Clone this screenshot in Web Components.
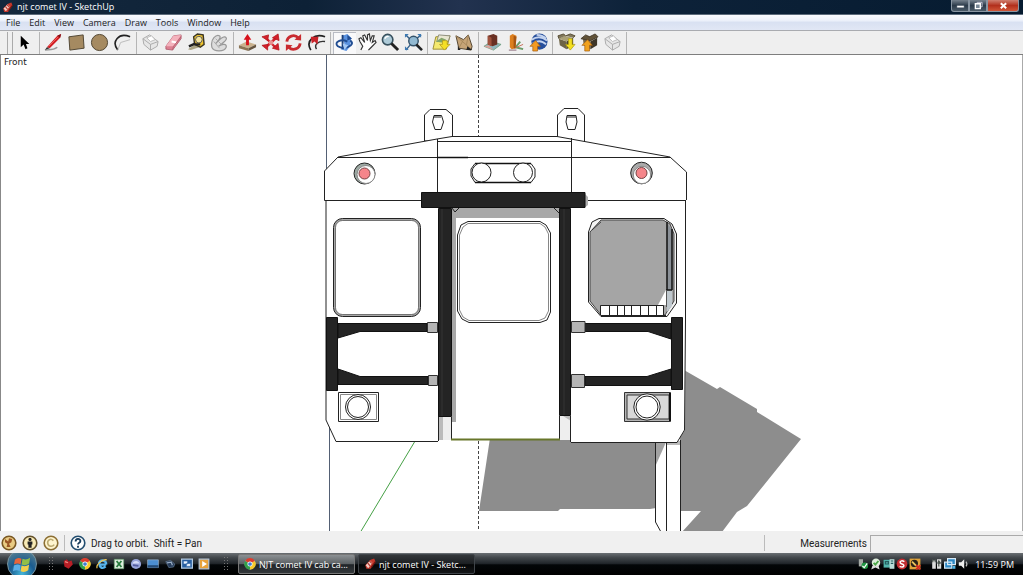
<!DOCTYPE html>
<html lang="en">
<head>
<meta charset="utf-8">
<title>njt comet IV - SketchUp</title>
<style>
html,body{margin:0;height:100%}
body{font-family:"Open Sans","Noto Sans",sans-serif;font-size:9px;color:#222;background:#000}
</style>
</head>
<body>
<sketch-desktop></sketch-desktop>
<script>
const define = (name, html, setup) => {
  const t = document.createElement('template');
  t.innerHTML = html;
  customElements.define(name, class extends HTMLElement {
    constructor() {
      super();
      this.attachShadow({ mode: 'open' }).append(t.content.cloneNode(true));
    }
    connectedCallback() { if (setup) setup(this, this.shadowRoot); }
  });
};

const chrome = `<circle cx="10" cy="10" r="9" fill="#ddd"/><path d="M10 10L2 5A9 9 0 0 1 18 5Z" fill="#dd3c2c"/><path d="M10 10L18 5A9 9 0 0 1 10 19Z" fill="#f6c92b"/><path d="M10 10V19A9 9 0 0 1 2 5Z" fill="#33a04a"/><circle cx="10" cy="10" r="4.2" fill="#fff"/><circle cx="10" cy="10" r="3.1" fill="#3f7fd0"/>`;
const icons = {
  app: `<path d="M2 12L11 3L17 1L19 6L11 18L4 18Z" fill="#c5372b"/><path d="M3 12L10 4L14 8L7 17Z" fill="#f3cdc4"/><path d="M9 5L13 9M6 8L10 13" stroke="#b0392f" stroke-width="2"/><path d="M12 16L19 6" stroke="#6d1712" stroke-width="2"/>`,
  select: `<path d="M5 3V15L8 12L10 17L12 16L10.500 11.500H14Z" fill="#000"/>`,
  pencil: `<path d="M1 18C4 17 9 19 14 15" stroke="#999" stroke-width="1.500" fill="none"/><path d="M3 15L14 3L18 1L17 5L6 16Z" fill="#d11b22"/><path d="M14 3L18 1L17 5Z" fill="#7a1015"/><path d="M3 15L1 18L6 16Z" fill="#333"/><path d="M5 14L15 4" stroke="#f06a60"/>`,
  rect: `<path d="M2 4L17 2L18 16L3 18Z" fill="#a58a61" stroke="#4e4330"/>`,
  circle: `<circle cx="10" cy="10" r="8.500" fill="#a58a61" stroke="#4e4330"/>`,
  arc: `<path d="M5 18C-2 9 6 -1 18 4" fill="none" stroke="#222" stroke-width="1.700"/><path d="M5 18L8 10L18 7" fill="none" stroke="#bbb"/>`,
  box: `<path d="M2 6L9 2L18 9L17 14L10 18L3 12Z" fill="#e6e6e6" stroke="#aaa"/><path d="M2 6L10 12L18 9M10 12V18" fill="none" stroke="#aaa"/><path d="M6 5L11 3L15 7L10 9Z" fill="#fff" stroke="#bbb"/>`,
  eraser: `<path d="M2 14L10 3L18 2L18 6L9 18L2 17Z" fill="#dd8092" stroke="#aa5566" stroke-width=".8"/><path d="M2 14L10 3L18 2L10 14Z" fill="#f4b3bd"/><path d="M8 9L13 10" stroke="#fff" stroke-width="2"/><path d="M9 18L10 14L18 4" stroke="#b5606f" fill="none"/>`,
  tape: `<path d="M1 17L10 11L13 15L4 18Z" fill="#a9a282"/><path d="M7 4L11 1L17 2L18 12L14 15L8 12Z" fill="#f0c52d" stroke="#3a3523" stroke-width="1.500"/><circle cx="12.500" cy="7" r="3.500" fill="#f5e5a0" stroke="#555"/><path d="M9 11L2 14M8 12H14" stroke="#222" stroke-width="2.500"/>`,
  paint: `<path d="M2 15C0 6 7 1 10 3C12 4 9 8 6 11C10 7 15 2 17 5C19 8 11 12 9 14C13 11 18 11 17 15C15 20 4 20 2 15Z" fill="#ddd" stroke="#999" stroke-width="1.300"/><path d="M4 9L10 16M6 6L12 12" stroke="#aaa"/>`,
  push: `<path d="M1 13L9 9L19 12L11 16Z" fill="#c9b18d"/><path d="M1 13L11 16V19L1 16Z" fill="#8a7455"/><path d="M11 16L19 12V15L11 19Z" fill="#665540"/><path d="M8.500 13V7H6L10 1L14 7H11.500V13Z" fill="#d7121c"/>`,
  move: `<path d="M5 5L15 15M16 5L5 15" stroke="#d4202a" stroke-width="2.500"/><path d="M1 4L8 2L7 8ZM12 5L18 1L19 8ZM1 13L7 12L7 18ZM12 16L18 11L19 18Z" fill="#d4202a" stroke="#b0151c" stroke-width=".8"/><circle cx="10.500" cy="10" r="2.500" fill="#e8908f"/>`,
  rotate: `<path d="M3 9A7 7 0 0 1 15 5M17 11A7 7 0 0 1 5 15" fill="none" stroke="#c92b2f" stroke-width="3"/><path d="M11 7L18 8L18 1ZM9 13L2 12L2 19Z" fill="#c92b2f"/>`,
  offset: `<path d="M4 18C-2 8 8 0 19 4" fill="none" stroke="#222" stroke-width="1.800"/><path d="M10 17C7 12 12 8 19 9" fill="none" stroke="#333" stroke-width="1.500"/><path d="M4 4L12 4L11 12L8 9L5 11Z" fill="#c8232a"/>`,
  orbit: `<path d="M8 3L13 1L17 5L16 14L12 19L6 17L10 12Z" fill="#5a92e0"/><path d="M8 2V17" stroke="#1b3f78" stroke-width="2"/><path d="M16 8C23 13 9 18 3 14C-2 9 7 6 13 9" fill="none" stroke="#214d92" stroke-width="2"/><path d="M8 11L14 13L10 18Z" fill="#a5c9f6"/><path d="M13 2L18 6L13 8Z" fill="#214d92"/>`,
  hand: `<path d="M3 18L5 14L2 9L1 6L3 5L7 10L5 3L7 2L10 8L10 2L12 1L13 8L15 3L17 3L15 10L18 8L19 10L14 15L11 18" fill="#fff" stroke="#333" stroke-width="1.200"/>`,
  zoom: `<circle cx="7" cy="7" r="5.500" fill="#aecbd8" stroke="#38515e" stroke-width="1.700"/><path d="M4 6C5 4 7 3 8 4" stroke="#fff" stroke-width="1.500" fill="none"/><path d="M11 11L18 18" stroke="#222" stroke-width="3"/>`,
  extents: `<path d="M2 2L7 7M18 2L12 7M2 18L7 12M12 12L18 18" stroke="#37658f" stroke-width="1.500"/><path d="M1 1H5L1 5ZM18 1H14L18 5ZM1 18V14L5 18Z" fill="#3d79b1"/><circle cx="10" cy="8.500" r="5" fill="#91b9d2" stroke="#34536b" stroke-width="1.500"/><path d="M13 12L19 18" stroke="#222" stroke-width="2.500"/>`,
  map: `<path d="M4 4L19 3L15 17L1 17Z" fill="#f4e96f" stroke="#9a8b34"/><path d="M7 2L19 3L17 9L5 9Z" fill="#e8e6d0" stroke="#8c8c7c"/><path d="M4 9L10 5L15 7L10 10Z" fill="#82a569"/><path d="M11 8H16V12H19L13 18L8 12H11Z" fill="#f5df26" stroke="#a79013" stroke-width=".7"/>`,
  terrain: `<path d="M1 3L9 7L14 2L18 14L17 18L4 16Z" fill="#c6a477" stroke="#51432f"/><path d="M1 3L17 17M9 7L4 16M14 2L12 13" fill="none" stroke="#a6885c"/><path d="M13 14L18 18H12ZM3 14L6 18H3Z" fill="#222"/>`,
  house: `<path d="M1 14L9 9L19 12L11 18Z" fill="#90b6bc" stroke="#697" stroke-width=".8"/><path d="M5 3L11 1L15 3V12L10 14L5 12Z" fill="#693023"/><path d="M5 3L9 5V14L5 12Z" fill="#9f513b"/><path d="M1 14L6 13L11 18Z" fill="#dda29b"/>`,
  pillar: `<path d="M10 15L15 9M10 15L18 17" fill="none" stroke="#6b9b67" stroke-width="2"/><path d="M9 16L18 12" stroke="#c56c55"/><path d="M4 3L7 1L11 3L10 16L6 17L4 15Z" fill="#dc7f1e"/><path d="M8 3L11 4L10 16H8Z" fill="#a65613"/><path d="M3 18H11" stroke="#867"/>`,
  earth: `<circle cx="11" cy="9" r="8.500" fill="#274f9b"/><path d="M3 7C9 3 14 4 19 8M4 11C10 7 15 9 18 12M8 2C13 2 16 4 18 6" fill="none" stroke="#c4d3ee" stroke-width="2"/><path d="M4 19V14H1L7 8L12 14H9V19Z" fill="#f39b21" stroke="#a05911" stroke-width=".7"/>`,
  get: `<path d="M2 6L10 9V17L3 13Z" fill="#6e6446"/><path d="M10 9L17 5V13L10 17Z" fill="#453e2c"/><path d="M2 6L8 3L16 5L10 9Z" fill="#aaa078"/><path d="M2 6L1 3L7 1L9 3M17 5L19 3L14 1L9 3" fill="#81775a" stroke="#554b35"/><path d="M12 6H16V12H19L14 18L9 12H12Z" fill="#f4df20" stroke="#a69511" stroke-width=".7"/>`,
  share: `<path d="M3 6L11 9V17L4 13Z" fill="#756849"/><path d="M11 9L18 5V13L11 17Z" fill="#3e3729"/><path d="M3 6L9 3L17 5L11 9Z" fill="#95835d"/><path d="M1 6L6 2L10 4L16 1L19 4L11 8Z" fill="#625338" stroke="#463c2c"/><path d="M5 19V13H2L8 7L13 13H10V19Z" fill="#f0a11d" stroke="#a05c10" stroke-width=".7"/>`,
  copyright: `<circle cx="10" cy="10" r="8.500" fill="#fff5cf" stroke="#8c6f34" stroke-width="2"/><path d="M13 7C9 3 5 7 6 11C7 15 12 15 14 12" fill="none" stroke="#bba970" stroke-width="2"/>`,
  geo: `<circle cx="10" cy="10" r="8.500" fill="#e9cb83" stroke="#795721" stroke-width="2"/><path d="M5 5L9 8L10 4L14 5L13 9L10 11L12 15H7L8 11L5 9Z" fill="#9a5726"/>`,
  person: `<circle cx="10" cy="10" r="8.500" fill="#f9ebb5" stroke="#63512b" stroke-width="2"/><circle cx="10" cy="5.500" r="2" fill="#222"/><path d="M7 8H13V12H12V16H8V12H7Z" fill="#222"/>`,
  help: `<circle cx="10" cy="10" r="8.500" fill="#fff" stroke="#234e70" stroke-width="2"/><path d="M7 8C7 4 13 4 13 7.500C13 10 10 9.500 10 12M10 13.500V16" fill="none" stroke="#183c5c" stroke-width="2.300"/>`,
  red: `<path d="M3 5L8 2L11 6L16 4L18 11L11 18L4 14Z" fill="#b71e26"/><path d="M5 6L10 8" stroke="#ef8a81" stroke-width="2"/>`,
  chrome,
  ie: `<path d="M17 11H6C6 17 12 18 16 14M17 11C17 3 7 2 5 9" fill="none" stroke="#58b4ed" stroke-width="4"/><path d="M2 17C-1 12 11 1 18 3" stroke="#efc755" stroke-width="2" fill="none"/>`,
  excel: `<path d="M2 2H18V18H2Z" fill="#dceddc"/><path d="M6 5L14 15M14 5L6 15" stroke="#287a3e" stroke-width="3"/><path d="M2 2H18V18H2Z" fill="none" stroke="#4b8a55"/>`,
  orb: `<circle cx="10" cy="10" r="8.500" fill="#98a4d9"/><path d="M4 9C7 3 14 4 16 9" fill="#d7dcf7"/><path d="M5 12L14 13" stroke="#535b9e" stroke-width="3"/>`,
  desktop: `<path d="M1 3H19V16H1Z" fill="#4c8ed1" stroke="#a9bdd1"/><path d="M1 12H19V16H1Z" fill="#234975"/>`,
  gadget: `<path d="M3 6L11 4L18 10L16 15L8 16Z" fill="#263b59" stroke="#7289a5"/><path d="M5 8L12 7L14 12" stroke="#98acc4" stroke-width="2" fill="none"/>`,
  flip: `<path d="M1 2H19V17H1Z" fill="#285fa1" stroke="#b2c9e0" stroke-width="2"/><path d="M4 5H11V10H4ZM9 9H16V14H9Z" fill="#eaf3ff" stroke="#285fa1"/>`,
  media: `<path d="M2 2H18V18H2Z" fill="#e8a23b" stroke="#b5c5d8" stroke-width="2"/><path d="M7 5L15 10L7 15Z" fill="#fff"/>`,
  usb: `<path d="M3 2H10V14H3Z" fill="#a5aaa5"/><circle cx="13" cy="13" r="5.500" fill="#209742"/><path d="M9 13L12 16L17 9" stroke="#fff" stroke-width="2" fill="none"/>`,
  award: `<circle cx="10" cy="8" r="7" fill="#dfeedd"/><path d="M4 13L2 19L9 16L16 19L14 12" fill="#ddd"/><path d="M6 8L9 11L14 5" stroke="#4ba748" stroke-width="3" fill="none"/>`,
  net: `<path d="M1 3H12V16H1Z" fill="#52b5ad"/><path d="M11 2H19V18H11Z" fill="#badcd8"/><path d="M4 6H9V10H4ZM13 5H17M13 9H17" stroke="#245e60" stroke-width="2" fill="none"/>`,
  shield: `<circle cx="10" cy="10" r="9" fill="#c22d31"/><path d="M14 6C6 2 5 9 10 10C15 11 14 17 6 14" stroke="#fff" stroke-width="2.500" fill="none"/>`,
  norton: `<path d="M1 1H19V19H1Z" fill="#e0a33a"/><circle cx="9" cy="9" r="6" fill="#282218"/><path d="M5 6L12 13" stroke="#ecc55e" stroke-width="3"/><path d="M12 12L19 19M19 12L12 19" stroke="#d62c23" stroke-width="3"/>`,
  power: `<path d="M2 4H8V18H2ZM10 2H17V18H10Z" fill="#ddd"/><path d="M3 2V7M7 2V7M13 5V14M11 9L13 5L16 9" stroke="#4c5650" stroke-width="2"/>`,
  monitors: `<path d="M6 1H19V11H6ZM1 7H13V17H1Z" fill="#2d88c5" stroke="#d6e8f5" stroke-width="2"/><path d="M14 13H19V18H14Z" fill="#4fb6e8"/>`,
  sound: `<path d="M3 7H7L12 2V18L7 13H3Z" fill="#eee"/><path d="M15 6Q18 10 15 14" stroke="#bbb" stroke-width="2" fill="none"/>`,
  min: `<path d="M2 10H18V15H2Z" fill="#fff" stroke="#465564" stroke-width="1"/>`,
  max: `<path d="M7 3H18V13H7Z" fill="none" stroke="#ccd" stroke-width="2"/><path d="M3 6H14V17H3Z" fill="#778796" stroke="#fff" stroke-width="3"/>`,
  close: `<path d="M4 5L16 16M16 5L4 16" stroke="#fff" stroke-width="4.500"/>`,
  windows: `<path d="M2 5Q5 2 9 4L8 10Q5 8 1 10Z" fill="#e8653a"/><path d="M10 4Q14 6 18 3L17 9Q13 12 9 10Z" fill="#92bf48"/><path d="M1 11Q5 9 8 11L7 17Q4 15 0 17Z" fill="#5caee7"/><path d="M9 11Q13 13 17 10L16 16Q12 19 8 17Z" fill="#f3cf4b"/>`
};

define('ui-icon', `<style>
:host{display:block;flex:none;width:var(--icon,20px);height:var(--icon,20px)}
svg{display:block;width:100%;height:100%}
</style><svg viewBox="0 0 20 20" aria-hidden="true"></svg>`,
(host, root) => { root.querySelector('svg').innerHTML = icons[host.getAttribute('name')] || ''; });

define('title-bar', `<style>
:host{display:flex;align-items:center;justify-content:space-between;height:14px;border-bottom:1px solid #5d6c7c;background:linear-gradient(90deg,#14283d,#0d2136 30%,#22324f 45%,#0d2239 62%,#061b30)}
h1{display:flex;align-items:center;gap:4px;margin:0;padding-left:2px;font-size:9px;line-height:14px;font-weight:400;color:#fff;--icon:11px}
div{display:flex;align-self:flex-start;padding-right:4px;--icon:9px}
button{display:flex;justify-content:center;align-items:center;width:18px;height:12px;padding:0;border:1px solid #8996a3;border-top:0;background:linear-gradient(#76828e,#2c3b4a 50%,#4a5a68)}
.min{border-radius:0 0 0 3px}
.close{width:32px;border-radius:0 0 3px 0;background:linear-gradient(#cf7f70,#b2301d 50%,#d05638)}
</style><h1><ui-icon name="app"></ui-icon><slot></slot></h1>
<div><button class="min" aria-label="Minimize"><ui-icon name="min"></ui-icon></button><button aria-label="Restore"><ui-icon name="max"></ui-icon></button><button class="close" aria-label="Close"><ui-icon name="close"></ui-icon></button></div>`);

define('menu-bar', `<style>
:host{display:flex;align-items:center;gap:9px;height:15px;padding-left:6px;background:linear-gradient(#fafbfe,#eef2fb 35%,#d9e1f2 50%,#e1e7f5);border-bottom:1px solid #a9abb0}
button{font:inherit;line-height:14px;color:#1c1c24;padding:0;border:0;background:none}
</style><button>File</button><button>Edit</button><button>View</button><button>Camera</button><button>Draw</button><button>Tools</button><button>Window</button><button>Help</button>`);

define('tool-button', `<style>
:host{display:block;flex:none}
button{display:flex;align-items:center;justify-content:center;width:23px;height:22px;padding:0;border:0;background:none}
:host([active]) button{background:#f9f9fa;box-shadow:inset 1px 1px #b9bcc4}
</style><button></button>`,
(host, root) => {
  const button = root.querySelector('button');
  const icon = document.createElement('ui-icon');
  icon.setAttribute('name', host.getAttribute('icon'));
  button.setAttribute('aria-label', host.getAttribute('icon'));
  button.replaceChildren(icon);
});

const toolGroups = [['select'], ['pencil','rect','circle','arc'], ['box','eraser','tape','paint'], ['push','move','rotate','offset'], ['orbit','hand','zoom','extents'], ['map','terrain'], ['house','pillar','earth'], ['get','share','box']];
define('tool-bar', `<style>
:host{display:flex;align-items:center;height:23px;background:#efefef;border-bottom:1px solid #7e7e7e}
.grip{width:4px;height:22px;margin:0 1px 0 7px;border-left:1px solid #aaa;border-right:1px solid #aaa}
.group{display:flex;padding-right:2px;margin-right:2px;border-right:1px solid #b5b5b5;--icon:19px}
</style><span class="grip"></span>`,
(host, root) => {
  for (const names of toolGroups) {
    const group = document.createElement('div');
    group.className = 'group';
    for (const name of names) {
      const tool = document.createElement('tool-button');
      tool.setAttribute('icon', name);
      if (name === 'orbit') tool.setAttribute('active', '');
      group.append(tool);
    }
    root.append(group);
  }
});

define('model-view', `<style>
:host{display:grid;flex:1;min-height:0;overflow:hidden;background:#fff;border-left:1px solid #888;border-right:1px solid #aaa;box-sizing:border-box}
svg,span{grid-area:1/1}
svg{display:block;width:100%;height:100%;min-height:0}
span{font-family:"DejaVu Sans",sans-serif;font-size:9px;line-height:14px;padding-left:3px;align-self:start;justify-self:start}
.l{fill:none;stroke:#222;stroke-width:1}
.w{fill:#fff;stroke:#222;stroke-width:1}
.g{fill:#b5b5b5;stroke:#333;stroke-width:1}
.k{fill:#242424;stroke:#111;stroke-width:1}
.s{fill:#8d8d8d}
.f{fill:none;stroke:#a8a8a8;stroke-width:2}
</style>
<svg viewBox="1 55 1021 477" preserveAspectRatio="xMidYMin slice" role="img" aria-label="Train car, front view">
<path d="M326.500 55V170M329.500 425V532" fill="none" stroke="#536074"/>
<path d="M478.500 55V137M478.500 441V532" fill="none" stroke="#444" stroke-dasharray="3 2"/>
<path d="M414.500 442L360.500 532" stroke="#45a045"/>
<path class="s" d="M490 438L479 511H558L560 509H650L656 508V438ZM684 370L717 389L720 387L757 409V412L801 439L747 506L737 512L722 532H682L701 511H680V430Z"/>
<path d="M655 440V522L661 532H680V440Z" fill="#fff"/>
<path d="M655 440H667L655 467Z" fill="#a2a2a2"/><path d="M667 441H680V445H667Z" fill="#bbb"/>
<path class="l" d="M655.500 440V522L661 532M666.500 441V532M680.500 440V532"/>
<path class="w" d="M424.500 141V115L430 109.500H446L452.500 115V141ZM557.500 141V115L564 108.500H578L584.500 115V143Z"/>
<path class="w" d="M434 115.500H441.500L443.500 122L441 129.500H435L432.500 122ZM567 115.500H576L577 122L575 129.500H568L566 122Z"/>
<path class="l" d="M434 117H441M567 117H576"/>
<path d="M338 157L437 139L452 136.500H557L670 157L686 172V200L685 430L677 442H571V440H438V441H336L326 420V200H324.500V171Z" fill="#fff"/>
<path class="l" d="M338 157L437 139L452 136.500H557L670 157L686.500 172V200M338 157L324.500 171V200.500H422M585 200.500H686M338 157.500H670M437 141.500H572M437.500 139V193M571.500 138V193M326 200V420L336 441.500H438M685.500 200V320L684.500 430L677 442.500H571"/>
<path d="M437 157.500H468" stroke="#111" stroke-width="1.500"/>
<g stroke="#222"><circle cx="364.500" cy="173.500" r="10.500" fill="#9ca9a3"/><circle cx="366" cy="174.500" r="9" fill="#fff" stroke="#888"/><circle cx="364.500" cy="173.500" r="5.500" fill="#f5858a" stroke="#754444"/>
<circle cx="641.500" cy="173" r="10.800" fill="#aaa"/><circle cx="642" cy="175" r="8.700" fill="#fff" stroke="#888"/><circle cx="641.500" cy="173" r="5.500" fill="#f5858a" stroke="#754444"/></g>
<path class="w" d="M475 163.500H531L535 169V177L531 182.500H475L471 176V169Z"/>
<path d="M475 163.500H531M475 182.500H531" stroke="#111" stroke-width="1.500"/>
<circle class="w" cx="481.500" cy="172.500" r="9.500"/><circle class="w" cx="523" cy="172.500" r="9.500"/>
<path d="M452 208H560V218H456V422H452Z" fill="#a8a8a8"/>
<path d="M439 417H452V440H439ZM559 416H571V440H559Z" fill="#eee"/><path d="M439 417H443V440H439ZM563 416H571V421Z" fill="#bbb"/>
<path class="l" d="M438.500 416V441M451.500 417V440M559.500 416V440M570.500 416V442M452 208L455 212L459 208M554 208L559 213"/>
<path d="M451 439.500H560" stroke="#68762b" stroke-width="2"/>
<path d="M585 194L588 197V205L584 208Z" fill="#b0b0b0"/>
<path class="k" d="M438.500 208.500H451.500V416.500H438.500ZM559.500 208.500H570.500V415.500H559.500ZM421.500 192.500H585V207.500H421.500Z"/>
<path d="M442 209V416M564 209V415" stroke="#2c2c2c" stroke-width="2"/>
<rect class="f" x="334.500" y="219.500" width="85" height="96" rx="8"/>
<rect class="l" x="333.500" y="218.500" width="87" height="98" rx="9"/><rect class="l" stroke-opacity=".55" x="335.500" y="220.500" width="83" height="94" rx="7"/>
<path class="l" d="M468 221.500H540L546 225L550.500 233V312L547 320L540 322.500H469L462 319L457.500 311V235L461 225Z"/><path class="l" stroke-opacity=".55" d="M468 223.500H540L545 227L548.500 234V311L545 318L539 320.500H469L463 317L459.500 310V235L463 227Z"/>
<path d="M599 218.500H664L672 224L676.500 234V303L667 316.500H601L588.500 302V232L592 222Z" fill="#f3f3f3" stroke="#222"/>
<path d="M601 220H663L670 224L674 234V301L665 315H601L590 301V232Z" fill="#a5a5a5" stroke="#444"/>
<path d="M667 288L658 305H667Z" fill="#fff"/><path d="M667 223L672 230V290H667Z" fill="#8a9097"/><path d="M667 290H672V306L667 312Z" fill="#bfc8ce"/><path d="M667 222V290M672 229V290M666 290H672" fill="none" stroke="#111" stroke-width="1.500"/><path d="M666.500 290V307" stroke="#555"/>
<path class="l" stroke-opacity=".7" d="M592 230L601 222"/>
<path d="M601 305H663V315H601Z" fill="#fff"/><path class="l" d="M600.500 315V305.500H663.500V315M609.500 305V315M617.500 305V315M624.500 305V315M631.500 305V315M640.500 305V315M648.500 305V315M656.500 305V315M601 315.500H666"/>
<path class="k" d="M326.500 317.500H337.500V390.500H326.500ZM338 323.500H427V331.500H360L338 338ZM338 369L360 376.500H428V384.500H338ZM671.500 317.500H682.500V389.500H671.500ZM585 323.500H671V339L648 331.500H585ZM585 376.500H647L671 369V385.500H585Z"/>
<path class="g" d="M427.500 322.500H437.500V332.500H427.500ZM428.500 375.500H437.500V385.500H428.500ZM571.500 321.500H585V332.500H571.500ZM571.500 374.500H584.500V387.500H571.500Z"/>
<path class="w" d="M338.500 392.500H378.500V421.500H338.500Z"/><path d="M340.500 394.500H376.500V419.500H340.500Z" fill="none" stroke="#888"/><circle class="w" cx="358" cy="407" r="12.500"/><circle class="w" cx="358" cy="407" r="10.500"/>
<path class="g" d="M624.500 392.500H670.500V421.500H624.500Z"/><path d="M627 395H669V419H627Z" fill="#d8d8d8" stroke="#333"/><path d="M670 393V421" stroke="#111" stroke-width="2"/><circle class="w" cx="647" cy="407" r="13.200"/><circle class="w" cx="647" cy="407" r="11"/>
</svg><span><slot></slot></span>`);

define('status-bar', `<style>
:host{display:flex;align-items:center;justify-content:space-between;box-sizing:border-box;height:22px;padding-top:2px;background:#f0f0f0;color:#222;font:10px Roboto,"Open Sans",sans-serif;--icon:16px}
div{display:flex;align-items:center;height:100%}
.left{gap:5px;padding-left:1px}
i{width:1px;height:16px;background:#bbb}
.right i{margin-right:35px}
.text{white-space:pre}
label{padding-right:3px}
input{box-sizing:border-box;width:153px;height:17px;border:1px solid #aaa;border-right:0;border-bottom:0;background:#f0f0f0;padding:0;font:inherit}
</style><div class="left"><ui-icon name="geo"></ui-icon><ui-icon name="person"></ui-icon><ui-icon name="copyright"></ui-icon><i></i><ui-icon name="help"></ui-icon><span class="text"><slot></slot></span></div>
<div class="right"><i></i><label for="m">Measurements</label><input id="m" type="text"></div>`);

define('task-bar', `<style>
:host{display:flex;align-items:center;height:22px;overflow:hidden;background:linear-gradient(#6a6f73,#44494d 20%,#20252a 48%,#030608 54%,#000);color:#fff;--icon:12px}
.start{display:flex;align-items:center;justify-content:center;flex:none;width:30px;height:30px;margin:0 11px 0 7px;padding:0;border:1px solid #78949f;border-radius:50%;background:radial-gradient(circle at 50% 85%,#44b5d8,#1a5b8f 45%,#47758f 75%,#9bb1bd);--icon:19px}
.dots{flex:none;width:7px;height:16px;background:radial-gradient(circle,#777 0 1px,transparent 1px) 0 0/3px 3px}
.quick{display:flex;gap:5px;padding:0 13px 0 7px}
.tasks{display:flex;gap:3px;flex:1;padding-left:8px}
.task{box-sizing:border-box;display:flex;align-items:center;gap:3px;width:117px;height:20px;padding:0 0 0 5px;border:1px solid #777;border-radius:2px;font:inherit;color:#fff;background:linear-gradient(#8c9194,#5c6164 48%,#202428 54%,#34383b);white-space:nowrap}
.on{border-color:#40454a;background:linear-gradient(#33373a,#1c1f22 48%,#050607 54%,#151719)}
.tray{display:flex;align-items:center;gap:1px;padding-right:9px}
.gap{width:8px}time{padding-left:5px}
</style><button class="start" aria-label="Start"><ui-icon name="windows"></ui-icon></button><span class="dots"></span>
<div class="quick"><ui-icon name="red"></ui-icon><ui-icon name="chrome"></ui-icon><ui-icon name="ie"></ui-icon><ui-icon name="excel"></ui-icon><ui-icon name="orb"></ui-icon><ui-icon name="desktop"></ui-icon><ui-icon name="gadget"></ui-icon><ui-icon name="flip"></ui-icon><ui-icon name="media"></ui-icon></div><span class="dots"></span>
<div class="tasks"><button class="task"><ui-icon name="chrome"></ui-icon>NJT comet IV cab ca...</button><button class="task on"><ui-icon name="app"></ui-icon>njt comet IV - Sketc...</button></div>
<div class="tray"><ui-icon name="usb"></ui-icon><ui-icon name="award"></ui-icon><ui-icon name="net"></ui-icon><ui-icon name="shield"></ui-icon><ui-icon name="norton"></ui-icon><span class="gap"></span><ui-icon name="power"></ui-icon><ui-icon name="monitors"></ui-icon><ui-icon name="sound"></ui-icon><time>11:59 PM</time></div>`);

define('sketch-desktop', `<style>:host{display:flex;flex-direction:column;height:100vh;overflow:hidden}title-bar,menu-bar,tool-bar,status-bar,task-bar{flex:none}</style>
<title-bar>njt comet IV - SketchUp</title-bar><menu-bar></menu-bar><tool-bar></tool-bar><model-view>Front</model-view><status-bar>Drag to orbit.  Shift = Pan</status-bar><task-bar></task-bar>`);
</script>
</body>
</html>
